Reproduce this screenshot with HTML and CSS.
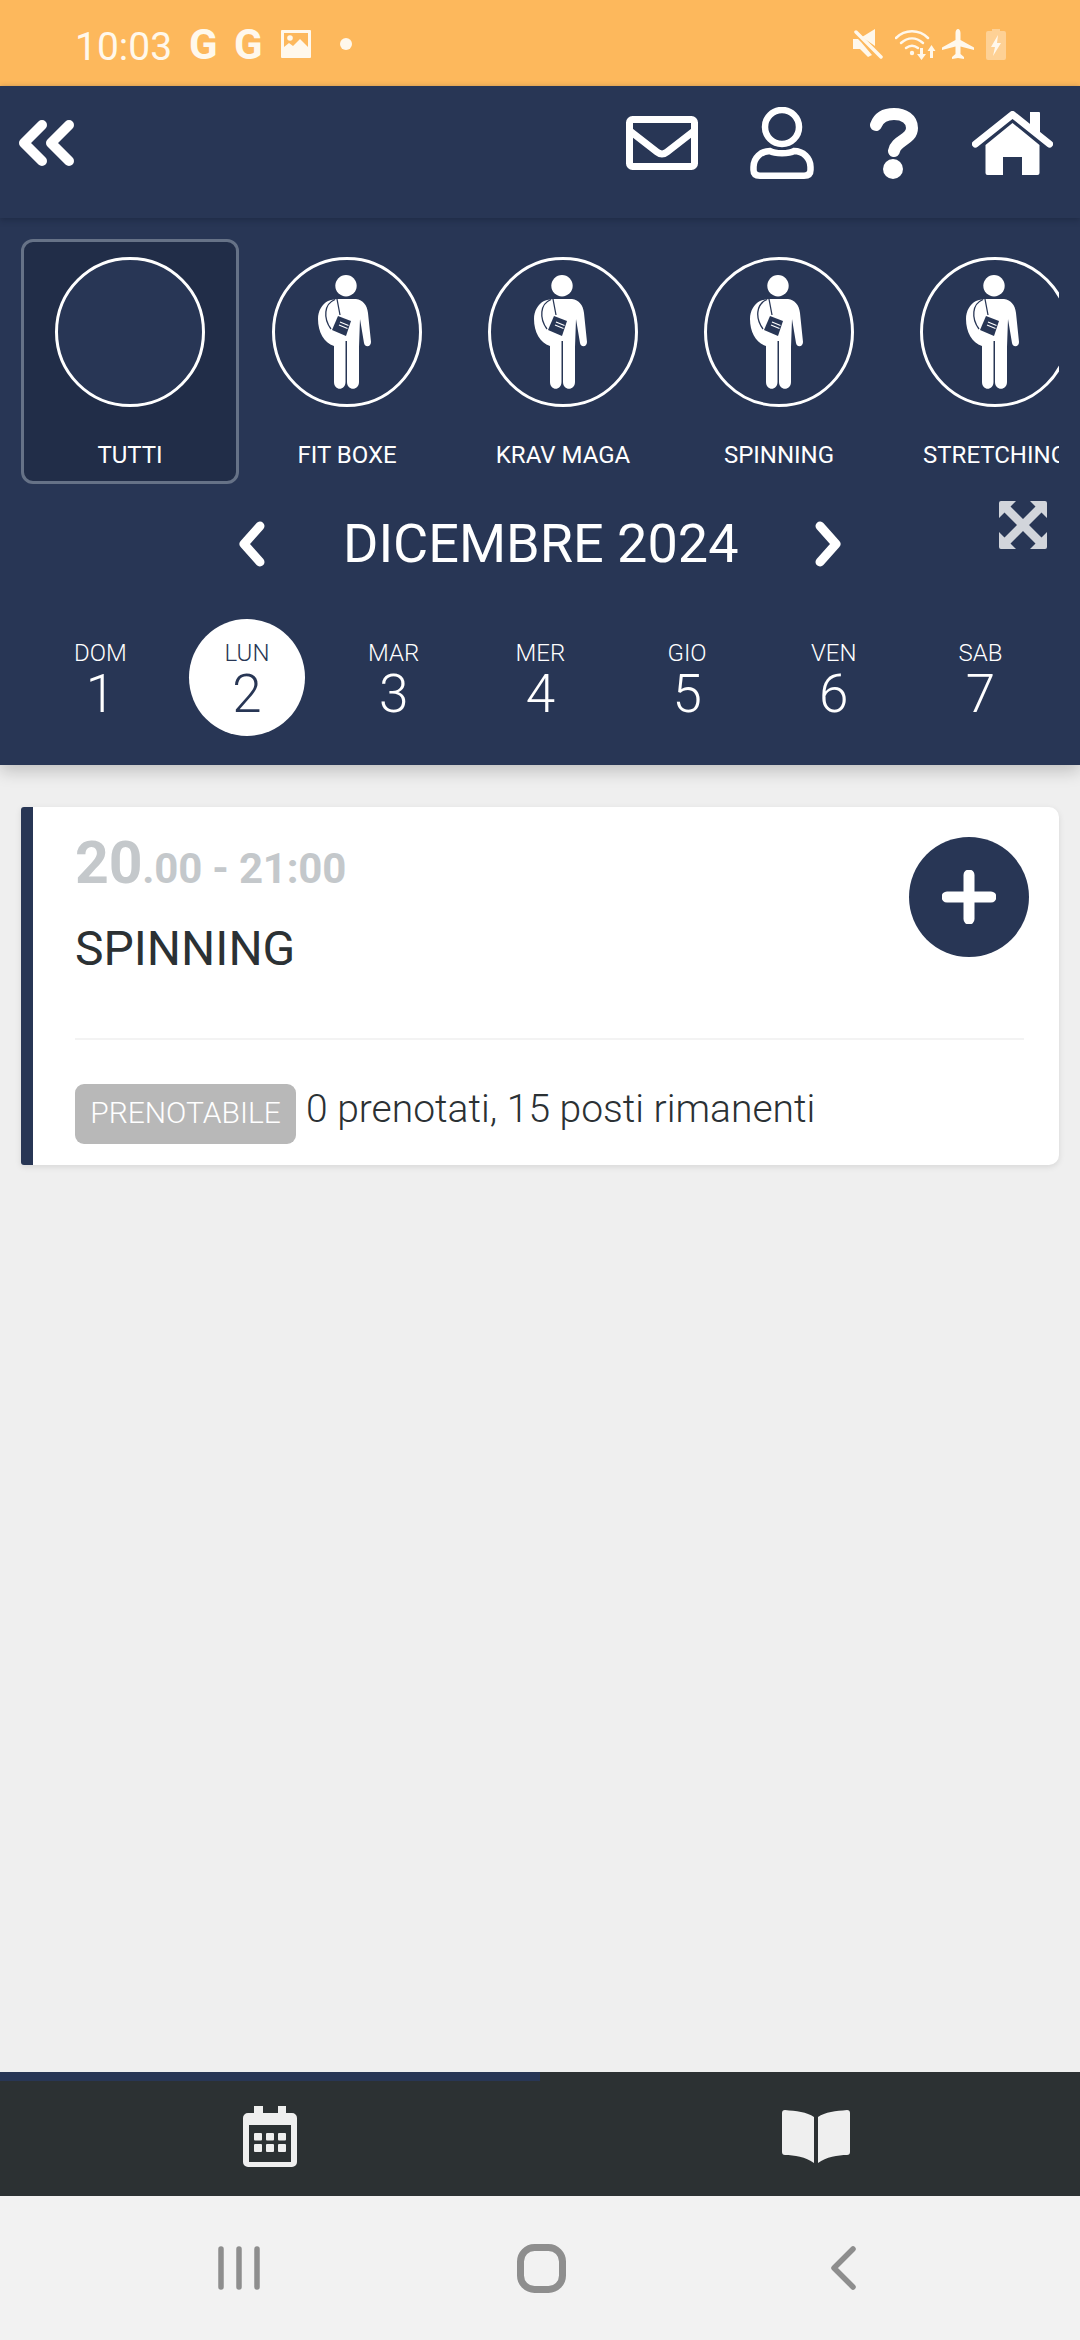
FILE: index.html
```html
<!DOCTYPE html>
<html lang="it">
<head>
<meta charset="utf-8">
<title>Calendario</title>
<link rel="stylesheet" href="styles.css">
</head>
<body>
<svg class="defs" width="0" height="0">
  <defs>
    <symbol id="person" viewBox="0 0 53 114">
      <circle cx="28" cy="10.700" r="10.700" fill="#fff"/>
      <path fill="#fff" d="M10 26 C14 24.500 18 24 22 24 L38 24 C45 25 49 30 50 38 L53 67 C53 72 47 73 46 68 L42 44 L41 72 V107 C41 116 29 116 29 107 V66 H27.500 V107 C27.500 116 16 116 16 107 V71 C6 68 0 57 0 44 C0 36 4 29 10 26 Z"/>
      <path fill="none" stroke="#283655" stroke-width="1.300" d="M17 24.500 C6 29 5 43 13 54"/>
      <path fill="none" stroke="#283655" stroke-width="1.300" d="M19 24 L22 40"/>
      <path fill="#283655" d="M20 41 L33 46 L28 61 L14 55 Z"/>
      <path fill="none" stroke="#fff" stroke-width="1.200" d="M22 47 L30.500 50.500 M21 50 L29.500 53.500"/>
    </symbol>
  </defs>
</svg>
<div class="phone">
  <div class="status">
    <span class="clock">10:03</span>
    <span class="g">G</span>
    <span class="g">G</span>
    <svg class="st-img" viewBox="0 0 30 28"><path fill="#fff8ec" fill-rule="evenodd" d="M1 0h28a1 1 0 0 1 1 1v26a1 1 0 0 1-1 1H1a1 1 0 0 1-1-1V1a1 1 0 0 1 1-1Zm2 3v14l5-4 4 3 7-7 8 8V3Z"/><circle cx="9" cy="8" r="2.800" fill="#fff8ec"/></svg>
    <span class="dot"></span>
    <span class="spacer"></span>
    <svg class="st-mute" viewBox="0 0 30 30"><path fill="#fff8ec" d="M0 10h5l3 3 11 13-4 2L7 20H0Z M9 8l13-8v17Z"/><path stroke="#fff8ec" stroke-width="3.500" stroke-linecap="round" d="M3 3 L28 28"/></svg>
    <svg class="st-wifi" viewBox="0 0 41 31"><g fill="none" stroke="#fff8ec" stroke-width="2.500" stroke-linecap="round"><path d="M1 9 C10 0 24 0 33 9"/><path d="M6 14 C13 8 21 8 28 14"/><path d="M11 19 C15 16 19 16 23 19"/></g><circle cx="17" cy="24" r="2.200" fill="#fff8ec"/><path fill="#fff8ec" d="M25 19h3v6h3l-4.500 6L22 25h3Z M36.500 16l4 6h-2.500v7h-3v-7H32.500Z"/></svg>
    <svg class="st-plane" viewBox="0 0 32 31"><path fill="#fff8ec" d="M16 0c1.500 0 2.500 2 2.500 4v7L32 18.500v2.500l-13.500-3.500V25l3.500 3v2l-6-1-6 1v-2l3.500-3v-7.500L0 21v-2.500L13.500 11V4c0-2 1-4 2.500-4Z"/></svg>
    <svg class="st-bat" viewBox="0 0 20 31"><path fill="#fff" fill-opacity=".35" d="M6 0h8v2h4a2 2 0 0 1 2 2v25a2 2 0 0 1-2 2H2a2 2 0 0 1-2-2V4a2 2 0 0 1 2-2h4Z"/><path fill="#fff8ec" d="M12 6 5 18h4l-2 9 8-13h-4Z"/></svg>
  </div>

  <header class="topbar">
    <svg class="ic-back" viewBox="0 0 57 46"><g fill="none" stroke="#fff" stroke-width="10" stroke-linecap="round" stroke-linejoin="round"><path d="M24 5 L6 23 L24 41"/><path d="M51 5 L33 23 L51 41"/></g></svg>
    <span class="spacer"></span>
    <svg class="ic-mail" viewBox="0 0 72 54"><rect x="3.500" y="3.500" width="65" height="47" rx="3" fill="none" stroke="#fff" stroke-width="7"/><path d="M4 15 L31 36 Q36 40 41 36 L68 15" fill="none" stroke="#fff" stroke-width="7"/></svg>
    <svg class="ic-user" viewBox="0 0 64 72"><circle cx="32" cy="20" r="17" fill="none" stroke="#fff" stroke-width="6.500"/><path d="M20 44 C25 47 39 47 44 44 C53 44 60.500 51 60.500 60 L60.500 63 Q60.500 68.700 54 68.700 L10 68.700 Q3.500 68.700 3.500 63 L3.500 60 C3.500 51 11 44 20 44 Z" fill="none" stroke="#fff" stroke-width="6.500"/></svg>
    <svg class="ic-help" viewBox="0 0 50 72"><path d="M7 18 C10 10 16 7 25 7 C35 7 43 12 43 21 C43 33 27 33 25 44" fill="none" stroke="#fff" stroke-width="12" stroke-linecap="round"/><circle cx="24" cy="62" r="10" fill="#fff"/></svg>
    <svg class="ic-home" viewBox="0 0 81 64"><path d="M3.500 33 L40.500 3.500 L77.500 33" fill="none" stroke="#fff" stroke-width="7" stroke-linecap="round" stroke-linejoin="round"/><path fill="#fff" d="M58 1h9a1 1 0 0 1 1 1v23l-10-8Z M40.500 12 L67.500 34 V62 a2 2 0 0 1-2 2 H50 V46 H31 V64 H15.500 a2 2 0 0 1-2-2 V34 Z"/></svg>
  </header>

  <section class="panel">
    <div class="cats">
      <div class="cat cat-on"><div class="ring"></div><div class="cat-name">TUTTI</div></div>
      <div class="cat"><div class="ring"><svg class="person"><use href="#person"/></svg></div><div class="cat-name">FIT BOXE</div></div>
      <div class="cat"><div class="ring"><svg class="person"><use href="#person"/></svg></div><div class="cat-name">KRAV MAGA</div></div>
      <div class="cat"><div class="ring"><svg class="person"><use href="#person"/></svg></div><div class="cat-name">SPINNING</div></div>
      <div class="cat"><div class="ring"><svg class="person"><use href="#person"/></svg></div><div class="cat-name">STRETCHING</div></div>
    </div>
    <div class="month">
      <svg class="chev" viewBox="0 0 30 48"><path d="M23 6 L7 24 L23 42" fill="none" stroke="#fff" stroke-width="9" stroke-linecap="round" stroke-linejoin="round"/></svg>
      <span class="month-name">DICEMBRE 2024</span>
      <svg class="chev" viewBox="0 0 30 48"><path d="M7 6 L23 24 L7 42" fill="none" stroke="#fff" stroke-width="9" stroke-linecap="round" stroke-linejoin="round"/></svg>
      <svg class="expand" viewBox="0 0 48 48"><path fill="#d2d5db" d="M0 2a2 2 0 0 1 2-2h15l-5.500 5.500L24 18 36.500 5.500 31 0h15a2 2 0 0 1 2 2v15l-5.500-5.500L30 24l12.500 12.500L48 31v15a2 2 0 0 1-2 2H31l5.500-5.500L24 30 11.500 42.500 17 48H2a2 2 0 0 1-2-2V31l5.500 5.500L18 24 5.500 11.500 0 17Z"/></svg>
    </div>
    <div class="week">
      <div class="day"><span class="dn">DOM</span><span class="dd">1</span></div>
      <div class="day day-on"><span class="dn">LUN</span><span class="dd">2</span></div>
      <div class="day"><span class="dn">MAR</span><span class="dd">3</span></div>
      <div class="day"><span class="dn">MER</span><span class="dd">4</span></div>
      <div class="day"><span class="dn">GIO</span><span class="dd">5</span></div>
      <div class="day"><span class="dn">VEN</span><span class="dd">6</span></div>
      <div class="day"><span class="dn">SAB</span><span class="dd">7</span></div>
    </div>
  </section>

  <main class="content">
    <article class="card">
      <div class="card-top">
        <div class="card-info">
          <div class="time"><span class="time-big">20</span>.00 - 21:00</div>
          <div class="title">SPINNING</div>
        </div>
        <button class="add" type="button"><svg viewBox="0 0 54 54"><path d="M27 5 V49 M5 27 H49" stroke="#fff" stroke-width="11" stroke-linecap="round"/></svg></button>
      </div>
      <div class="card-bottom">
        <span class="badge">PRENOTABILE</span>
        <span class="seats">0 prenotati, 15 posti rimanenti</span>
      </div>
    </article>
  </main>

  <footer class="tabs">
    <div class="tab-ind"></div>
    <div class="tab-row">
      <div class="tab">
        <svg class="ic-cal" viewBox="0 0 54 61"><path fill="#efefef" fill-rule="evenodd" d="M11 0h9v7h15V0h8v7h6a5 5 0 0 1 5 5v44a5 5 0 0 1-5 5H5a5 5 0 0 1-5-5V12a5 5 0 0 1 5-5h6ZM6 19v37h42V19Z"/><g fill="#efefef"><rect x="11" y="27" width="8" height="7.500" rx="1"/><rect x="23" y="27" width="8" height="7.500" rx="1"/><rect x="35" y="27" width="8" height="7.500" rx="1"/><rect x="11" y="38" width="8" height="8" rx="1"/><rect x="23" y="38" width="8" height="8" rx="1"/><rect x="35" y="38" width="8" height="8" rx="1"/></g></svg>
      </div>
      <div class="tab">
        <svg class="ic-book" viewBox="0 0 68 53"><path fill="#efefef" d="M3 0 C14 1 25 2 32 7 V53 C24 47 12 45 3 45 Q0 45 0 42 V3 Q0 0 3 0 Z M65 0 C54 1 43 2 36 7 V53 C44 47 56 45 65 45 Q68 45 68 42 V3 Q68 0 65 0 Z"/></svg>
      </div>
    </div>
  </footer>

  <nav class="sysnav">
    <svg class="nav-recent" viewBox="0 0 42 44"><path d="M3 3 V41 M21 3 V41 M39 3 V41" stroke="#8e8e8e" stroke-width="5.500" stroke-linecap="round"/></svg>
    <svg class="nav-home" viewBox="0 0 49 49"><rect x="3.500" y="3.500" width="42" height="42" rx="14" fill="none" stroke="#8e8e8e" stroke-width="7"/></svg>
    <svg class="nav-back" viewBox="0 0 26 44"><path d="M23 3 L4 22 L23 41" fill="none" stroke="#8e8e8e" stroke-width="5.500" stroke-linecap="round" stroke-linejoin="round"/></svg>
  </nav>
</div>
</body>
</html>
```
FILE: styles.css
```css
* { box-sizing: border-box; }
html, body { margin: 0; padding: 0; }
body { font-family: Roboto, "Liberation Sans", sans-serif; background: #efefef; }
.defs { position: absolute; }
.phone { width: 1080px; height: 2340px; display: flex; flex-direction: column; overflow: hidden; }
.spacer { flex: 1; }

/* status bar */
.status { height: 86px; background: #fdb85c; display: flex; align-items: center; padding: 0 74px 0 75px; color: #fff8ec; flex: none; }
.status svg { display: block; flex: none; margin-top: 2px; }
.clock { font-size: 39px; width: 114px; margin-top: 7px; }
.g { font-size: 42px; font-weight: 700; width: 45px; margin-top: 3px; }
.st-img { width: 30px; height: 28px; margin-left: 2px; }
.dot { width: 12px; height: 12px; border-radius: 50%; background: #fff8ec; margin-left: 29px; margin-top: 2px; }
.st-mute { width: 30px; height: 30px; }
.st-wifi { width: 41px; height: 31px; margin-left: 12px; }
.st-plane { width: 32px; height: 31px; margin-left: 6px; }
.st-bat { width: 20px; height: 31px; margin-left: 12px; }

/* top bar */
.topbar { height: 132px; background: #283655; display: flex; align-items: center; flex: none; padding: 0 27px 18px 18px; position: relative; z-index: 2; box-shadow: 0 2px 6px rgba(20, 30, 50, .45); }
.topbar svg { display: block; flex: none; }
.ic-back { width: 57px; height: 46px; }
.ic-mail { width: 72px; height: 54px; }
.ic-user { width: 64px; height: 72px; margin-left: 52px; }
.ic-help { width: 50px; height: 72px; margin-left: 55px; }
.ic-home { width: 81px; height: 64px; margin-left: 53px; }

/* panel */
.panel { background: #283655; height: 547px; flex: none; position: relative; z-index: 1; box-shadow: 0 6px 16px rgba(0, 0, 0, .2); color: #fff; }
.cats { display: flex; width: 1038px; margin-left: 21px; overflow: hidden; padding-top: 21px; height: 281px; }
.cat { flex: none; width: 216px; height: 245px; display: flex; flex-direction: column; align-items: center; padding-top: 15px; border: 3px solid transparent; border-radius: 12px; }
.cat-on { background: #212d48; border-color: #667287; width: 218px; }
.ring { width: 150px; height: 150px; border: 3px solid #fff; border-radius: 50%; display: flex; align-items: center; justify-content: center; background: #283655; flex: none; }
.person { width: 53px; height: 114px; margin-right: 5px; }
.cat-name { font-size: 24px; margin-top: 34px; white-space: nowrap; line-height: 28px; }
.month { height: 90px; position: relative; display: flex; align-items: center; justify-content: center; gap: 76px; }
.chev { width: 30px; height: 48px; flex: none; }
.month-name { font-size: 54px; width: 394px; text-align: center; white-space: nowrap; line-height: 60px; }
.expand { position: absolute; right: 33px; top: 2px; width: 48px; height: 48px; }
.week { display: flex; padding: 30px 0 0 27px; }
.day { width: 146.700px; height: 117px; display: flex; flex-direction: column; align-items: center; padding-top: 22px; font-weight: 300; }
.day-on { width: 116px; margin: 0 15.350px; background: #fff; border-radius: 50%; color: #283655; }
.dn { font-size: 24px; line-height: 24px; }
.dd { font-size: 53px; line-height: 50px; margin-top: 4px; }

/* content */
.content { flex: 1; padding: 42px 21px 0; background: #efefef; }
.card { height: 358px; width: 1038px; background: #fff; border-left: 12px solid #283655; border-radius: 3px 10px 10px 3px; box-shadow: 0 2px 6px rgba(0, 0, 0, .1); padding: 0 35px 0 42px; }
.card-top { height: 233px; border-bottom: 2px solid #f3f3f3; display: flex; justify-content: space-between; }
.time { font-size: 42px; font-weight: 700; color: #c4c8cb; margin-top: 25px; line-height: 62px; letter-spacing: -0.2px; }
.time-big { font-size: 59px; }
.title { font-size: 48px; color: #2b3134; margin-top: 22px; line-height: 54px; }
.add { width: 120px; height: 120px; border: 0; border-radius: 50%; background: #283655; padding: 33px; margin: 30px -5px 0 0; flex: none; }
.add svg { display: block; width: 54px; height: 54px; }
.card-bottom { display: flex; align-items: center; height: 125px; padding-top: 23px; }
.badge { font-size: 30px; font-weight: 300; color: #fff; background: #b8b8b8; border-radius: 9px; height: 60px; width: 221px; padding-bottom: 4px; display: flex; align-items: center; justify-content: center; }
.seats { font-size: 39px; font-weight: 300; color: #2b3134; margin-left: 10px; margin-bottom: 10px; white-space: nowrap; }

/* bottom tabs */
.tabs { height: 124px; background: #2c3133; flex: none; }
.tab-ind { width: 540px; height: 9px; background: #283655; }
.tab-row { display: flex; height: 115px; }
.tab { width: 50%; display: flex; align-items: center; justify-content: center; padding-bottom: 5px; }
.ic-cal { width: 54px; height: 61px; }
.ic-book { width: 68px; height: 53px; margin-left: 12px; }

/* system nav */
.sysnav { height: 144px; background: #f2f2f2; flex: none; display: flex; align-items: center; padding: 0 0 0 218px; }
.sysnav svg { display: block; flex: none; }
.nav-recent { width: 42px; height: 44px; }
.nav-home { width: 49px; height: 49px; margin-left: 257px; }
.nav-back { width: 26px; height: 44px; margin-left: 264px; }
```
